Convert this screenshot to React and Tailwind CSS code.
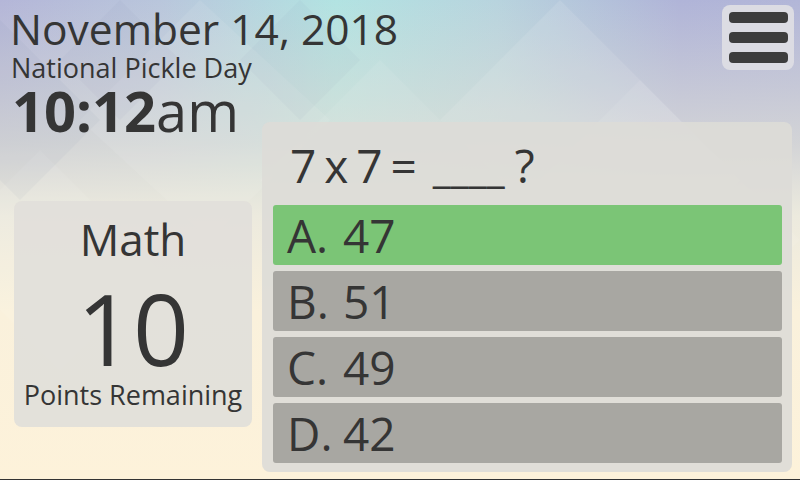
import React from 'react';

const options = [
  { letter: 'A.', value: '47', correct: true },
  { letter: 'B.', value: '51' },
  { letter: 'C.', value: '49' },
  { letter: 'D.', value: '42' },
];

// soft diamond shapes behind everything
const Backdrop = () => (
  <svg className="absolute inset-0" width="800" height="480" viewBox="0 0 800 480">
    <g fill="#ffffff">
      <polygon points="560,0 740,180 620,300 440,120" opacity="0.1" />
      <polygon points="200,0 330,120 210,240 80,120" opacity="0.08" />
      <polygon points="640,80 800,240 700,340 540,180" opacity="0.08" />
      <polygon points="380,60 520,200 400,320 260,180" opacity="0.07" />
      <polygon points="40,150 160,270 60,370 -60,250" opacity="0.08" />
    </g>
    <g fill="#6b6fa0">
      <polygon points="0,20 100,120 20,200 -80,100" opacity="0.05" />
      <polygon points="120,0 180,60 120,120 60,60" opacity="0.04" />
      <polygon points="300,0 360,60 300,120 240,60" opacity="0.04" />
    </g>
  </svg>
);

const App = () => {
  return (
    <div
      className="relative w-[800px] h-[480px] overflow-hidden border-b border-[#333] text-[#353535] bg-[linear-gradient(90deg,#b4b6d8_0%,#b9c6dc_20%,#b2e3e2_42%,#b8d4de_62%,#b0b4d8_85%,#b2b6d8_100%)]"
      style={{ fontFamily: '"Open Sans", "Liberation Sans", sans-serif' }}
    >
      <div className="absolute inset-0 bg-[linear-gradient(180deg,rgba(220,220,214,0)_0%,rgba(222,222,214,0.75)_30%,rgba(236,234,222,1)_45%,rgba(250,241,220,1)_65%,rgba(253,242,218,1)_100%)]" />
      <Backdrop />

      <div className="relative flex h-full">
        {/* left column */}
        <div className="w-[262px] shrink-0 flex flex-col">
          <div className="pl-[10px] pt-[7px] whitespace-nowrap">
            <div className="text-[42.5px] leading-[44px]">November 14, 2018</div>
            <div className="mt-[2px] pl-[1px] text-[27px] leading-[30px]">National Pickle Day</div>
            <div className="pl-[2px] text-[56px] leading-[54px]">
              <span className="font-bold">10:12</span>am
            </div>
          </div>

          <div className="mt-[64px] ml-[14px] w-[238px] h-[226px] rounded-lg bg-[#e1dfda]/95 flex flex-col items-center pt-[13px]">
            <div className="text-[44px] leading-[50px]">Math</div>
            <div className="mt-[14px] text-[98px] leading-[100px]">10</div>
            <div className="mt-[2px] text-[27px] leading-[30px] whitespace-nowrap">Points Remaining</div>
          </div>
        </div>

        {/* right column */}
        <div className="flex-1 flex flex-col">
          <div className="self-end mr-[6px] mt-[5px] w-[72px] h-[65px] rounded-lg bg-[#dcdce3] flex flex-col justify-center items-center gap-[9px]">
            <span className="block w-[59px] h-[11px] rounded-[4px] bg-[#3d3d3d]" />
            <span className="block w-[59px] h-[11px] rounded-[4px] bg-[#3d3d3d]" />
            <span className="block w-[59px] h-[11px] rounded-[4px] bg-[#3d3d3d]" />
          </div>

          <div className="mt-[52px] w-[530px] h-[350px] rounded-lg bg-[#dddcd7]/90 pl-[11px] pr-[10px] pt-[18px]">
            <div className="pl-[17px] text-[46px] leading-[50px] whitespace-nowrap">
              <span className="[word-spacing:-4px]">7 x 7 =</span>
              <span className="ml-[16px] text-[41px]">____</span>
              <span className="ml-[10px]">?</span>
            </div>
            <div className="mt-[13px] flex flex-col gap-[6px]">
              {options.map((o) => (
                <div
                  key={o.letter}
                  className={`h-[60px] rounded-[3px] pl-[14px] text-[46px] leading-[60px] whitespace-nowrap ${
                    o.correct ? 'bg-[#7bc576]' : 'bg-[#a8a7a2]'
                  }`}
                >
                  <span className="inline-block w-[56px]">{o.letter}</span>
                  {o.value}
                </div>
              ))}
            </div>
          </div>
        </div>
      </div>
    </div>
  );
};

export default App;
